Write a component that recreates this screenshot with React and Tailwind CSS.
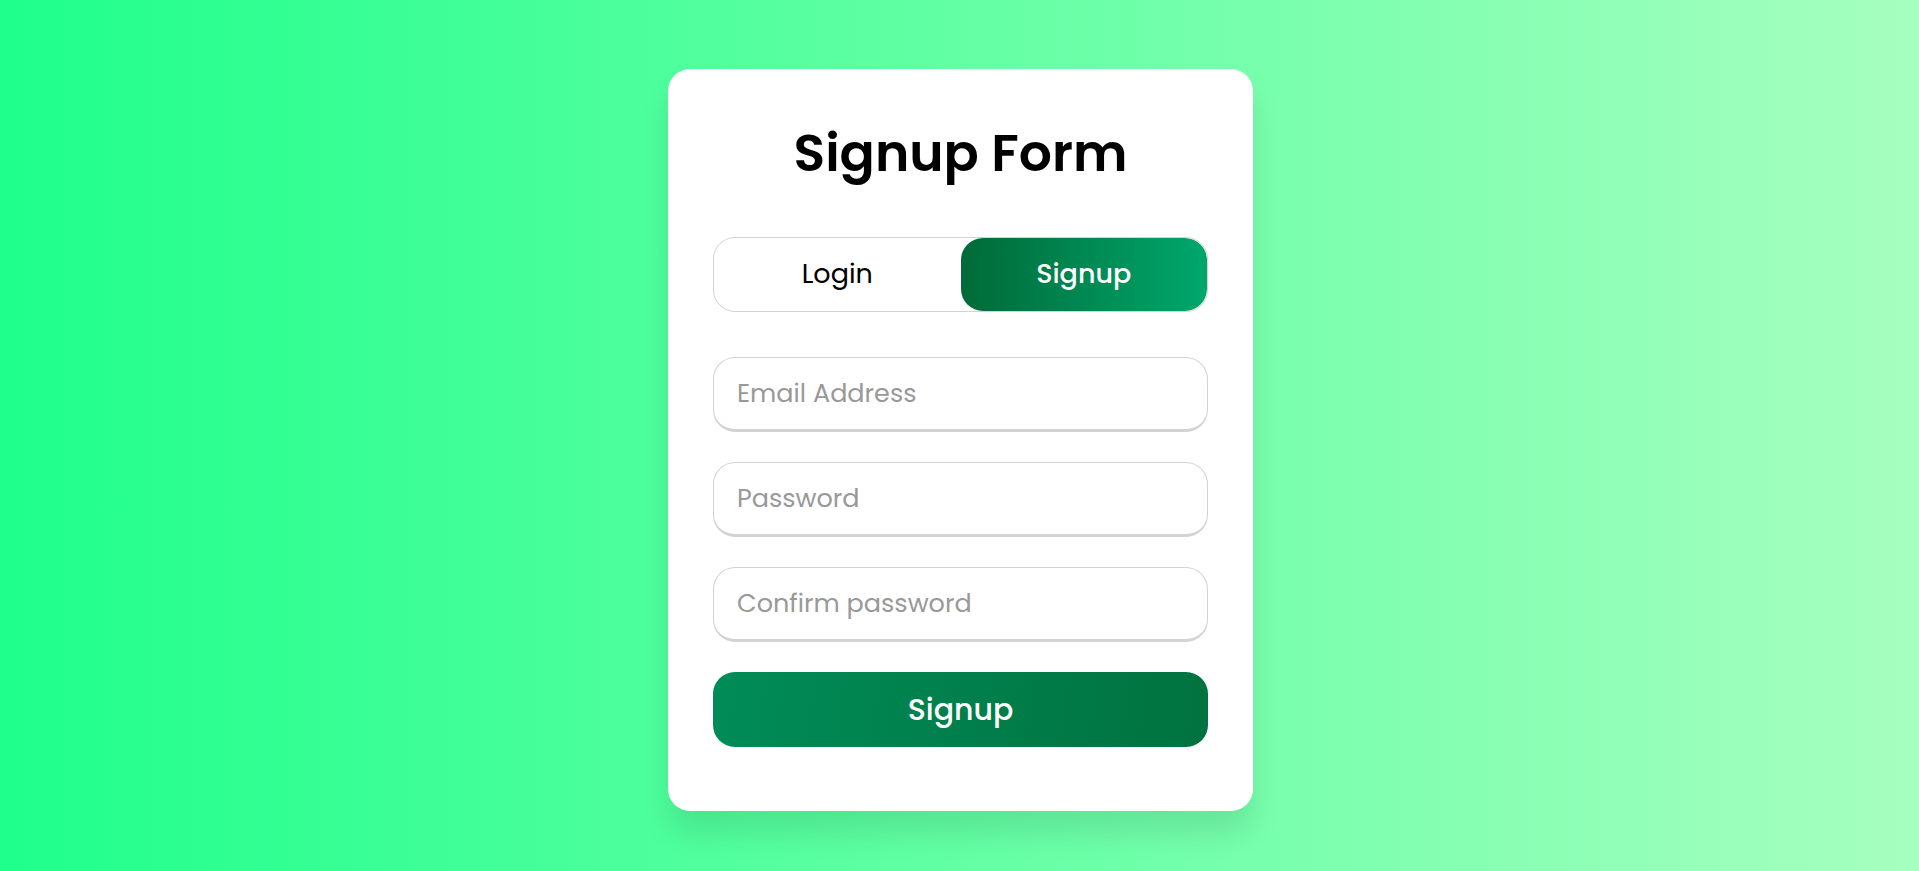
export default function App() {
  const font = { fontFamily: '"Poppins", "Open Sans", "Noto Sans", sans-serif' };
  return (
    <div
      className="w-full h-[871px] flex justify-center items-start pt-[69px] pl-[2px] bg-[linear-gradient(to_right,#1fff8b,#a6ffbf)]"
      style={font}
    >
      <div className="w-[585px] bg-white rounded-[22px] px-[45px] pt-[44px] pb-[64px] shadow-[0_22px_30px_rgba(0,0,0,0.1)]">
        <h1 className="text-center text-[52px] font-semibold leading-[79px] text-black">Signup Form</h1>
        <div className="mt-[45px] mb-[15px] h-[75px] flex border-[1.5px] border-[#d3d3d3] rounded-[22px] overflow-hidden">
          <div className="flex-1 flex items-center justify-center text-[27px] font-normal text-black">Login</div>
          <div className="flex-1 flex items-center justify-center text-[27px] font-medium text-white rounded-[22px] bg-[linear-gradient(to_right,#006a38,#00a76c)]">Signup</div>
        </div>
        <div className="flex flex-col">
          {['Email Address', 'Password', 'Confirm password'].map((p) => (
            <input
              key={p}
              placeholder={p}
              type={p === 'Email Address' ? 'text' : 'password'}
              className="mt-[30px] h-[75px] w-full rounded-[22px] border-[1.5px] border-b-[3px] border-[#d3d3d3] pl-[23px] text-[25.5px] outline-none placeholder:text-[#999999]"
              style={font}
            />
          ))}
          <button
            className="mt-[30px] h-[75px] w-full rounded-[22px] text-white text-[30px] font-medium bg-[linear-gradient(100deg,#008c58,#00723f)]"
            style={font}
          >
            Signup
          </button>
        </div>
      </div>
    </div>
  );
}
